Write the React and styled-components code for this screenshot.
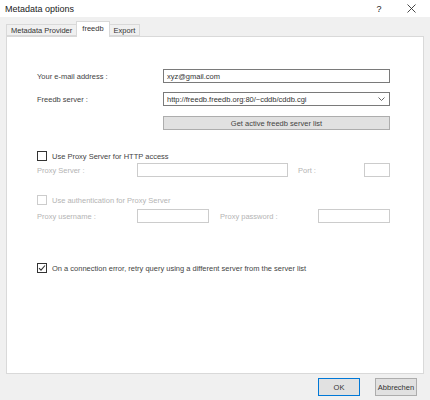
import styled, { createGlobalStyle } from "styled-components";

const Global = createGlobalStyle`
  html, body {
    margin: 0;
    padding: 0;
    background: #f0f0f0;
  }
  * {
    box-sizing: border-box;
  }
`;

const Window = styled.div`
  width: 430px;
  height: 400px;
  display: flex;
  flex-direction: column;
  background: #f0f0f0;
  font-family: "Liberation Sans", Arial, sans-serif;
  font-size: 7.5px;
  color: #444;
`;

const TitleBar = styled.div`
  height: 18px;
  background: #fff;
  display: flex;
  align-items: center;
  padding: 0 3px 0 5px;
  font-size: 9px;
  color: #222;
`;

const Title = styled.div`
  flex: 1;
`;

const TitleButton = styled.div`
  width: 32px;
  display: flex;
  justify-content: center;
  font-size: 9px;
  color: #222;
`;

const Body = styled.div`
  flex: 1;
  display: flex;
  flex-direction: column;
  padding: 2px 6px 0 6px;
`;

const Tabs = styled.div`
  display: flex;
  align-items: flex-end;
  height: 17px;
`;

const Tab = styled.div`
  height: ${(p) => (p.$active ? 16 : 12)}px;
  padding: 0 ${(p) => (p.$active ? 5 : 4)}px;
  display: flex;
  align-items: ${(p) => (p.$active ? "flex-start" : "center")};
  padding-top: ${(p) => (p.$active ? 2 : 0)}px;
  background: ${(p) => (p.$active ? "#fff" : "#f0f0f0")};
  border: 1px solid #d9d9d9;
  border-bottom: ${(p) => (p.$active ? "none" : "1px solid #d9d9d9")};
  margin-left: ${(p) => (p.$active ? -1 : 0)}px;
  margin-right: ${(p) => (p.$active ? -1 : 0)}px;
  position: relative;
  z-index: ${(p) => (p.$active ? 1 : 0)};
  margin-bottom: ${(p) => (p.$active ? -1 : 0)}px;
  color: #333;
`;

const Panel = styled.div`
  height: 338px;
  background: #fff;
  border: 1px solid #d9d9d9;
  padding: 32px 33px 0 30px;
  display: flex;
  flex-direction: column;
`;

const FormGrid = styled.div`
  display: grid;
  grid-template-columns: 126px 1fr;
  row-gap: 9px;
  align-items: center;
`;

const Label = styled.div`
  color: ${(p) => (p.$disabled ? "#b4b4b4" : "#444")};
  width: ${(p) => (p.$w ? p.$w + "px" : "auto")};
  padding-left: ${(p) => p.$pl || 0}px;
  flex-shrink: 0;
`;

const Field = styled.div`
  height: 14px;
  border: 1px solid ${(p) => (p.$disabled ? "#cccccc" : "#7a7a7a")};
  background: #fff;
  padding: 0 3px;
  display: flex;
  align-items: center;
  width: ${(p) => (p.$w ? p.$w + "px" : "auto")};
  flex-shrink: 0;
  color: #333;
`;

const Select = styled(Field)`
  justify-content: space-between;
  padding-right: 4px;
`;

const GetButton = styled.div`
  grid-column: 2;
  height: 14px;
  margin-top: 1px;
  background: #e1e1e1;
  border: 1px solid #adadad;
  display: flex;
  align-items: center;
  justify-content: center;
  color: #444;
`;

const CheckRow = styled.div`
  display: flex;
  align-items: center;
  gap: 5px;
  margin-top: ${(p) => p.$mt || 0}px;
  color: ${(p) => (p.$disabled ? "#b4b4b4" : "#444")};
`;

const Box = styled.div`
  width: 10px;
  height: 10px;
  border: 1px solid ${(p) => (p.$disabled ? "#cccccc" : "#333")};
  background: #fff;
  display: flex;
  align-items: center;
  justify-content: center;
`;

const FieldRow = styled.div`
  display: flex;
  align-items: center;
  margin-top: ${(p) => p.$mt || 0}px;
`;

const Footer = styled.div`
  height: 27px;
  display: flex;
  justify-content: flex-end;
  gap: 15px;
  padding: 4px 13px 0 0;
`;

const DlgButton = styled.div`
  width: 42px;
  height: 18px;
  display: flex;
  align-items: center;
  justify-content: center;
  background: #e1e1e1;
  border: 1px solid ${(p) => (p.$default ? "#0078d7" : "#adadad")};
  color: #333;
`;

const Check = ({ checked, disabled }) => (
  <Box $disabled={disabled}>
    {checked && (
      <svg width="8" height="8" viewBox="0 0 8 8">
        <path d="M1 4.2 L3 6.2 L7 1.5" stroke="#333" strokeWidth="1.1" fill="none" />
      </svg>
    )}
  </Box>
);

export default function App() {
  return (
    <>
      <Global />
      <Window>
        <TitleBar>
          <Title>Metadata options</Title>
          <TitleButton>?</TitleButton>
          <TitleButton>
            <svg width="9" height="9" viewBox="0 0 9 9">
              <path d="M0.5 0.5 L8.5 8.5 M8.5 0.5 L0.5 8.5" stroke="#333" strokeWidth="0.9" />
            </svg>
          </TitleButton>
        </TitleBar>
        <Body>
          <Tabs>
            <Tab>Metadata Provider</Tab>
            <Tab $active>freedb</Tab>
            <Tab>Export</Tab>
          </Tabs>
          <Panel>
            <FormGrid>
              <Label>Your e-mail address :</Label>
              <Field>xyz@gmail.com</Field>
              <Label>Freedb server :</Label>
              <Select>
                <span>http://freedb.freedb.org:80/~cddb/cddb.cgi</span>
                <svg width="7" height="4" viewBox="0 0 7 4">
                  <path d="M0.5 0.5 L3.5 3.5 L6.5 0.5" stroke="#555" strokeWidth="0.9" fill="none" />
                </svg>
              </Select>
              <GetButton>Get active freedb server list</GetButton>
            </FormGrid>

            <CheckRow $mt={21}>
              <Check />
              <span>Use Proxy Server for HTTP access</span>
            </CheckRow>
            <FieldRow $mt={2}>
              <Label $disabled $w={100}>Proxy Server :</Label>
              <Field $disabled $w={151} />
              <Label $disabled $w={76} $pl={10}>Port :</Label>
              <Field $disabled $w={26} />
            </FieldRow>

            <CheckRow $mt={18} $disabled>
              <Check disabled />
              <span>Use authentication for Proxy Server</span>
            </CheckRow>
            <FieldRow $mt={4}>
              <Label $disabled $w={100}>Proxy username :</Label>
              <Field $disabled $w={72} />
              <Label $disabled $w={109} $pl={11}>Proxy password :</Label>
              <Field $disabled $w={72} />
            </FieldRow>

            <CheckRow $mt={40}>
              <Check checked />
              <span>On a connection error, retry query using a different server from the server list</span>
            </CheckRow>
          </Panel>
        </Body>
        <Footer>
          <DlgButton $default>OK</DlgButton>
          <DlgButton>Abbrechen</DlgButton>
        </Footer>
      </Window>
    </>
  );
}
